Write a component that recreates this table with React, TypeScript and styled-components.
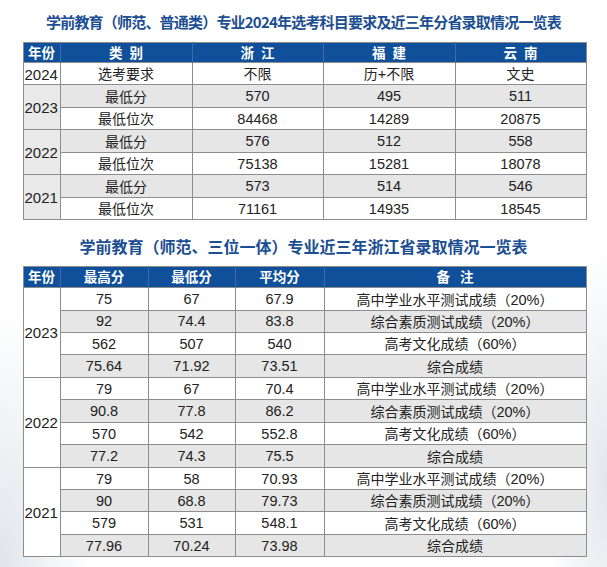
import React from "react";
import styled, { createGlobalStyle } from "styled-components";

const Global = createGlobalStyle`
  html, body { margin: 0; padding: 0; }
  body {
    width: 607px;
    height: 567px;
    overflow: hidden;
    background:
      radial-gradient(ellipse 90px 260px at 0% 100%, rgba(214,220,228,0.75), rgba(255,255,255,0) 100%),
      radial-gradient(ellipse 60px 240px at 100% 85%, rgba(214,220,228,0.7), rgba(255,255,255,0) 100%),
      #ffffff;
    font-family: "Liberation Sans", "Noto Sans CJK SC", sans-serif;
  }
`;

const Page = styled.div`
  display: flex;
  flex-direction: column;
  align-items: center;
  padding: 0 21px 0 23px;
  box-sizing: border-box;
  width: 607px;
`;

const Title = styled.h1<{ $size: number; $top: number; $track: number }>`
  margin: ${(p) => p.$top}px -21px 10px -23px;
  font-family: "Noto Sans CJK SC", sans-serif;
  font-size: ${(p) => p.$size}px;
  letter-spacing: ${(p) => p.$track}px;
  line-height: 20px;
  font-weight: 700;
  color: #1c4e92;
  white-space: nowrap;
  text-align: center;
  align-self: stretch;
`;

const Table = styled.table`
  border-collapse: collapse;
  table-layout: fixed;
  width: 563px;
  border: 1px solid #8d8d8d;
  font-family: "Liberation Sans", "Noto Sans CJK SC", sans-serif;
  font-size: 14.5px;
  color: #222;
`;

const HeadRow = styled.tr<{ $h: number }>`
  height: ${(p) => p.$h}px;
  background: #10509a;
`;

const Th = styled.th`
  padding: 0;
  font-family: "Noto Sans CJK SC", sans-serif;
  font-size: 13.5px;
  font-weight: 700;
  color: #ffffff;
  line-height: 1;
  text-align: center;
  border-left: 1px solid #3b6aa8;
  &:first-child { border-left: none; }
`;

const Spaced = styled.span<{ $gap: number }>`
  letter-spacing: ${(p) => p.$gap}px;
  margin-right: -${(p) => p.$gap}px;
`;

const Row = styled.tr<{ $shade: boolean }>`
  height: 22.45px;
  background: ${(p) => (p.$shade ? "#e6e6e6" : "#ffffff")};
`;

const Td = styled.td`
  padding: 1px 0 0;
  text-align: center;
  line-height: 1;
  border: 1px solid #8d8d8d;
  white-space: nowrap;
`;

const YearCell = styled.td<{ $shade?: boolean }>`
  padding: 1px 0 0 1px;
  text-align: left;
  font-size: 15px;
  line-height: 1;
  border: 1px solid #8d8d8d;
  background: ${(p) => (p.$shade ? "#e9e9e9" : "#ffffff")};
`;

const Cjk = styled.span`
  font-family: "Noto Sans CJK SC", sans-serif;
  font-size: 14px;
`;

const t1 = [
  { year: "2023", rows: [["最低分", "570", "495", "511"], ["最低位次", "84468", "14289", "20875"]] },
  { year: "2022", rows: [["最低分", "576", "512", "558"], ["最低位次", "75138", "15281", "18078"]] },
  { year: "2021", rows: [["最低分", "573", "514", "546"], ["最低位次", "71161", "14935", "18545"]] },
];

const notes = ["高中学业水平测试成绩（20%）", "综合素质测试成绩（20%）", "高考文化成绩（60%）", "综合成绩"];

const t2 = [
  { year: "2023", rows: [["75", "67", "67.9"], ["92", "74.4", "83.8"], ["562", "507", "540"], ["75.64", "71.92", "73.51"]] },
  { year: "2022", rows: [["79", "67", "70.4"], ["90.8", "77.8", "86.2"], ["570", "542", "552.8"], ["77.2", "74.3", "75.5"]] },
  { year: "2021", rows: [["79", "58", "70.93"], ["90", "68.8", "79.73"], ["579", "531", "548.1"], ["77.96", "70.24", "73.98"]] },
];

const Note = ({ text }: { text: string }) => {
  const parts = text.split(/(\d+%)/);
  return (
    <>
      {parts.map((p, i) => (/\d/.test(p) ? <span key={i}>{p}</span> : <Cjk key={i}>{p}</Cjk>))}
    </>
  );
};

export default function App() {
  return (
    <>
      <Global />
      <Page>
        <Title $size={15} $top={12} $track={-0.8}>
          学前教育（师范、普通类）专业2024年选考科目要求及近三年分省录取情况一览表
        </Title>
        <Table>
          <colgroup>
            <col style={{ width: 37 }} />
            <col style={{ width: 132 }} />
            <col style={{ width: 131 }} />
            <col style={{ width: 132 }} />
            <col style={{ width: 131 }} />
          </colgroup>
          <thead>
            <HeadRow $h={20}>
              <Th>年份</Th>
              <Th><Spaced $gap={7}>类别</Spaced></Th>
              <Th><Spaced $gap={7}>浙江</Spaced></Th>
              <Th><Spaced $gap={7}>福建</Spaced></Th>
              <Th><Spaced $gap={7}>云南</Spaced></Th>
            </HeadRow>
          </thead>
          <tbody>
            <Row $shade={false}>
              <YearCell>2024</YearCell>
              <Td><Cjk>选考要求</Cjk></Td>
              <Td><Cjk>不限</Cjk></Td>
              <Td><Cjk>历</Cjk>+<Cjk>不限</Cjk></Td>
              <Td><Cjk>文史</Cjk></Td>
            </Row>
            {t1.map((g) =>
              g.rows.map((r, i) => (
                <Row key={g.year + i} $shade={i === 0}>
                  {i === 0 && (
                    <YearCell rowSpan={2} $shade>
                      {g.year}
                    </YearCell>
                  )}
                  <Td><Cjk>{r[0]}</Cjk></Td>
                  <Td>{r[1]}</Td>
                  <Td>{r[2]}</Td>
                  <Td>{r[3]}</Td>
                </Row>
              ))
            )}
          </tbody>
        </Table>

        <Title $size={16} $top={16} $track={0}>
          学前教育（师范、三位一体）专业近三年浙江省录取情况一览表
        </Title>
        <Table>
          <colgroup>
            <col style={{ width: 37 }} />
            <col style={{ width: 88 }} />
            <col style={{ width: 87 }} />
            <col style={{ width: 89 }} />
            <col style={{ width: 262 }} />
          </colgroup>
          <thead>
            <HeadRow $h={21}>
              <Th>年份</Th>
              <Th>最高分</Th>
              <Th>最低分</Th>
              <Th>平均分</Th>
              <Th><Spaced $gap={10}>备注</Spaced></Th>
            </HeadRow>
          </thead>
          <tbody>
            {t2.map((g) =>
              g.rows.map((r, i) => (
                <Row key={g.year + i} $shade={i % 2 === 1}>
                  {i === 0 && <YearCell rowSpan={4}>{g.year}</YearCell>}
                  <Td>{r[0]}</Td>
                  <Td>{r[1]}</Td>
                  <Td>{r[2]}</Td>
                  <Td><Note text={notes[i]} /></Td>
                </Row>
              ))
            )}
          </tbody>
        </Table>
      </Page>
    </>
  );
}
